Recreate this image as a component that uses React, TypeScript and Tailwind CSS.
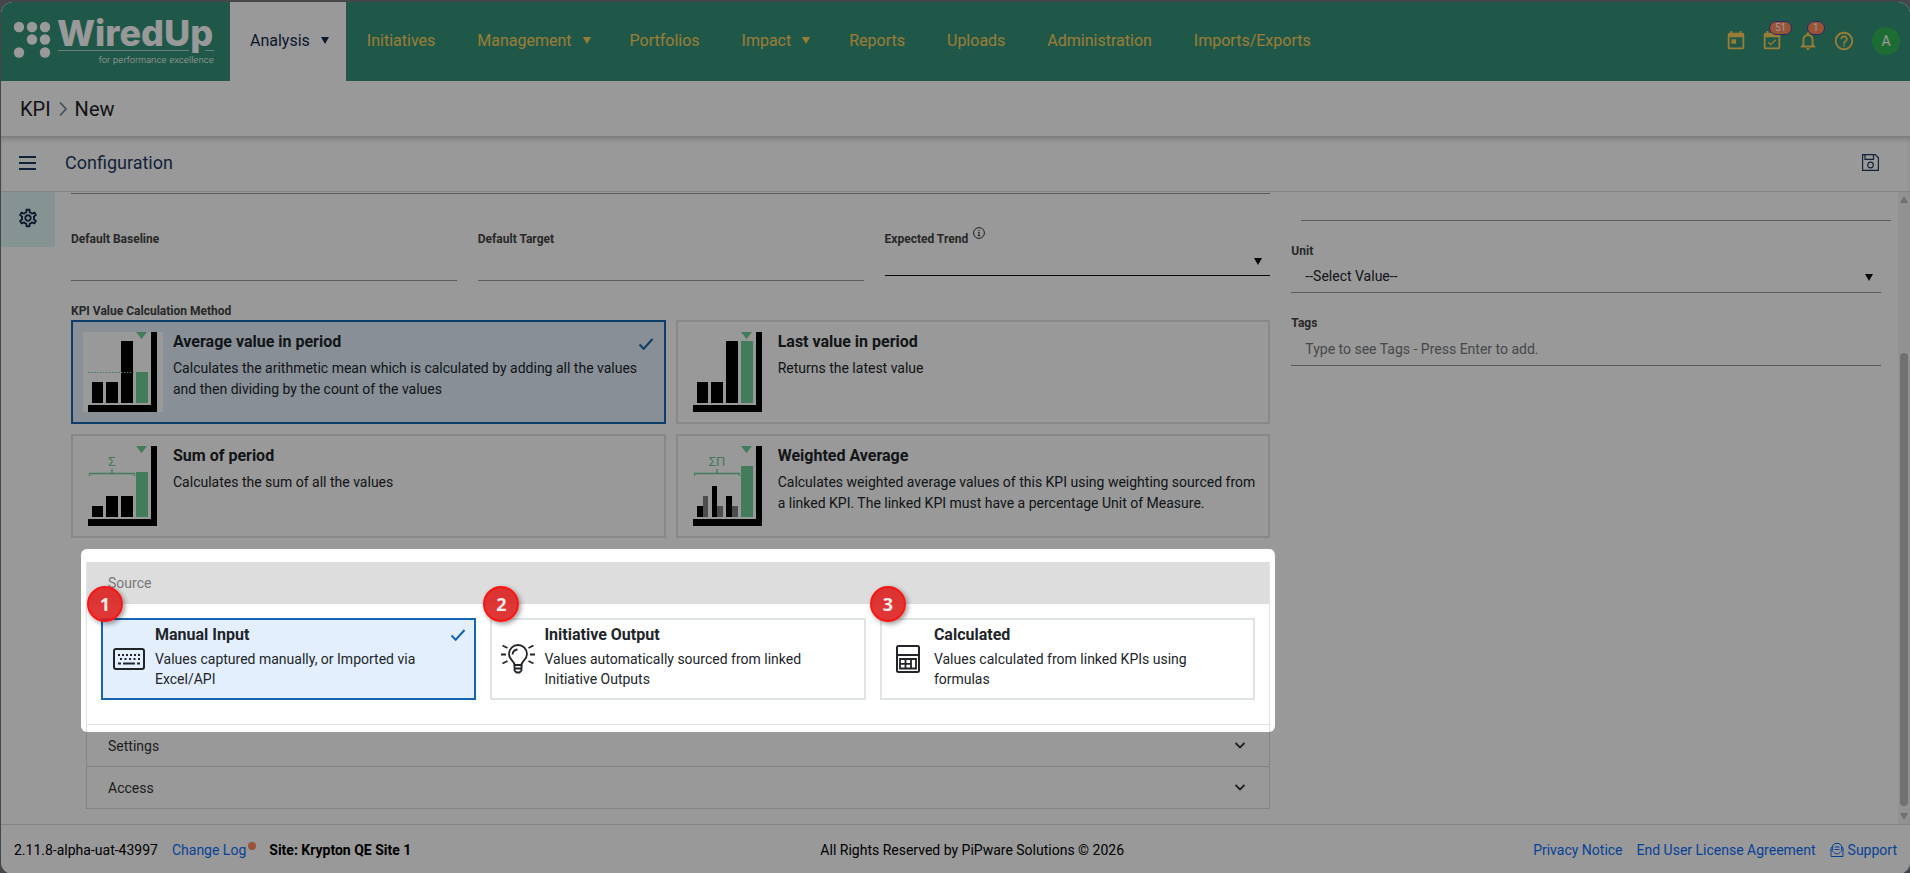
import React from 'react';
import { MdToday, MdEventAvailable, MdNotificationsNone, MdHelpOutline } from 'react-icons/md';

const NAV_ITEMS = [
  { label: 'Initiatives' },
  { label: 'Management', menu: true },
  { label: 'Portfolios' },
  { label: 'Impact', menu: true },
  { label: 'Reports' },
  { label: 'Uploads' },
  { label: 'Administration' },
  { label: 'Imports/Exports' },
];

const Caret = ({ className = '' }: { className?: string }) => (
  <svg viewBox="0 0 8 7" className={`w-2 h-[7px] shrink-0 fill-current ${className}`} aria-hidden="true">
    <path d="M0 0h8L4 7z" />
  </svg>
);

const Check = () => (
  <svg viewBox="0 0 16 16" className="w-4 h-4 shrink-0 text-[#1565b0]" fill="none" stroke="currentColor" strokeWidth="2" aria-hidden="true">
    <path d="M1.5 8.5l4.2 4.2L14.5 3" />
  </svg>
);

const Logo = () => (
  <svg viewBox="0 0 229 79" className="w-[229px] h-[79px]" fill="white" role="img" aria-label="WiredUp for performance excellence">
    <circle cx="18" cy="25" r="5.2" />
    <circle cx="31" cy="25" r="5.2" />
    <circle cx="44" cy="25" r="5.2" />
    <circle cx="31" cy="37.5" r="5.2" />
    <circle cx="44" cy="37.5" r="5.2" />
    <circle cx="18" cy="50.5" r="5.2" />
    <circle cx="44" cy="50.5" r="5.2" />
    <text x="56" y="44" fontFamily="Inter, sans-serif" fontWeight="800" fontSize="36">WiredUp</text>
    <path d="M57 48.5h131M204 48.5h9" stroke="white" strokeOpacity="0.6" />
    <text x="213" y="61" textAnchor="end" fontFamily="Inter, sans-serif" fontWeight="300" fontSize="9">for performance excellence</text>
  </svg>
);

type ChartKind = 'average' | 'last' | 'sum' | 'weighted';

const BARS: Record<ChartKind, { black: number[][]; gray: number[][]; greenTop: number }> = {
  average: { black: [[9, 50, 11], [23, 50, 12], [38, 9, 12]], gray: [], greenTop: 40 },
  last: { black: [[9, 50, 11], [23, 50, 12], [38, 9, 12]], gray: [], greenTop: 9 },
  sum: { black: [[9, 60, 11], [23, 50, 12], [38, 50, 12]], gray: [], greenTop: 26 },
  weighted: { black: [[9, 60, 6], [24, 40, 5], [38, 50, 6]], gray: [[15, 50, 5], [29, 60, 6], [44, 60, 6]], greenTop: 20 },
};

const MethodChart = ({ kind }: { kind: ChartKind }) => {
  const { black, gray, greenTop } = BARS[kind];
  const symbol = kind === 'sum' ? 'Σ' : kind === 'weighted' ? 'ΣΠ' : null;
  return (
    <svg viewBox="0 0 80 80" className="w-20 h-20 shrink-0 bg-white" aria-hidden="true">
      <path d="M68 0h6v80H5v-7h63z" />
      {black.map(([x, y, w]) => <rect key={x} x={x} y={y} width={w} height={71 - y} />)}
      {gray.map(([x, y, w]) => <rect key={x} x={x} y={y} width={w} height={71 - y} fill="#808080" />)}
      <rect x="53" y={greenTop} width="12" height={71 - greenTop} fill="#6fcf97" />
      <path d="M53 0h11l-5.500 7z" fill="#6fcf97" />
      {kind === 'average' && <path d="M5 40.500h46" stroke="#6fcf97" strokeDasharray="1.500 1.500" />}
      {symbol && (
        <>
          <path d="M6.500 30v-2.500h45V30M29 27.500V23" fill="none" stroke="#6fcf97" strokeWidth="1.3" />
          <text x="29" y="20" textAnchor="middle" fontFamily="Roboto, sans-serif" fontSize="13" fill="#6fcf97">{symbol}</text>
        </>
      )}
    </svg>
  );
};

const KeyboardIcon = () => (
  <svg viewBox="0 0 32 22" className="w-8 h-[22px]" fill="none" stroke="#212529" strokeWidth="2" aria-hidden="true">
    <rect x="1" y="1" width="30" height="20" rx="2" />
    <path d="M5 7h23" strokeDasharray="2 2" />
    <path d="M7 11h20" strokeDasharray="2 2.500" />
    <path d="M5 15.500h3M10 15.500h12M24 15.500h3" />
  </svg>
);

const BulbIcon = () => (
  <svg viewBox="0 0 36 30" className="w-9 h-[30px]" fill="none" stroke="#212529" strokeWidth="1.8" aria-hidden="true">
    <path d="M14.500 21c0-4-5.500-5-5.500-11a9 9 0 0 1 18 0c0 6-5.500 7-5.500 11z" />
    <path d="M12.500 10.500A5.500 5.500 0 0 1 17.500 5.500" />
    <path d="M14.500 21v5.500l2 2h3l2-2V21M14.500 24.500h7" />
    <path d="M1 10.500h5M30 10.500h5M2.500 1.500l5 2.500M33.500 1.500l-5 2.500M2.500 19.500l5-2.500M33.500 19.500l-5-2.500" />
  </svg>
);

const CalculatorIcon = () => (
  <svg viewBox="0 0 24 28" className="w-6 h-7" fill="none" stroke="#212529" strokeWidth="2" aria-hidden="true">
    <rect x="1" y="1" width="22" height="26" rx="1.500" />
    <path d="M1 10h22" />
    <path d="M4 14h16v9.500H4zM9.500 14v9.500M15 14v9.500M4 18.800h11" strokeWidth="1.800" />
  </svg>
);

const METHODS: { kind: ChartKind; title: string; description: string; selected?: boolean }[] = [
  { kind: 'average', title: 'Average value in period', description: 'Calculates the arithmetic mean which is calculated by adding all the values and then dividing by the count of the values', selected: true },
  { kind: 'last', title: 'Last value in period', description: 'Returns the latest value' },
  { kind: 'sum', title: 'Sum of period', description: 'Calculates the sum of all the values' },
  { kind: 'weighted', title: 'Weighted Average', description: 'Calculates weighted average values of this KPI using weighting sourced from a linked KPI. The linked KPI must have a percentage Unit of Measure.' },
];

const SOURCES = [
  { icon: <KeyboardIcon />, title: 'Manual Input', description: 'Values captured manually, or Imported via Excel/API', selected: true, pin: '-left-4' },
  { icon: <BulbIcon />, title: 'Initiative Output', description: 'Values automatically sourced from linked Initiative Outputs', pin: '-left-[9px]' },
  { icon: <CalculatorIcon />, title: 'Calculated', description: 'Values calculated from linked KPIs using formulas', pin: '-left-3' },
];

const cardColors = (selected?: boolean) =>
  selected ? 'border-[#1565b0] bg-[#e3effc]' : 'border-[#dfe5e5] bg-white';

const labelClass = 'flex text-xs leading-[18px] font-bold text-[#444]';

const Header = () => (
  <header className="flex items-stretch bg-[#35937a] text-[#ffd05a]">
    <a href="#home"><Logo /></a>
    <nav className="flex flex-1 text-base">
      <button type="button" className="flex items-center gap-[11px] pl-5 pr-[17px] pb-0.5 bg-white text-[#14284b]">
        Analysis <Caret />
      </button>
      {NAV_ITEMS.map(({ label, menu }) => (
        <button key={label} type="button" className={`flex items-center gap-[11px] pl-[21px] pb-0.5 ${menu ? 'pr-[18px]' : 'pr-[21px]'}`}>
          {label} {menu && <Caret />}
        </button>
      ))}
    </nav>
    <div className="flex items-center gap-3.5 pr-2.5 pb-0.5">
      <button type="button" aria-label="Calendar"><MdToday size={22} /></button>
      <button type="button" aria-label="Tasks" className="relative">
        <MdEventAvailable size={22} />
        <span className="absolute -top-[9px] left-2 px-[5px] h-3.5 rounded-full border border-[#4d45a8] bg-[#ff8a5c] text-[10px] leading-3 text-white">51</span>
      </button>
      <button type="button" aria-label="Notifications" className="relative">
        <MdNotificationsNone size={22} />
        <span className="absolute -top-[9px] left-2.5 px-[5px] h-3.5 rounded-full border border-[#4d45a8] bg-[#ff8a5c] text-[10px] leading-3 text-white">1</span>
      </button>
      <button type="button" aria-label="Help"><MdHelpOutline size={22} /></button>
      <button type="button" aria-label="Account" className="ml-[3px] w-7 h-7 rounded-full bg-[#2fb457] text-sm text-white">A</button>
    </div>
  </header>
);

const CollapsedSection = ({ title }: { title: string }) => (
  <button type="button" className="flex items-center justify-between w-full h-[42px] pl-[21px] pr-6 border-x border-b border-[#d8dcdc] text-sm text-[#333]">
    {title}
    <svg viewBox="0 0 10 7" className="w-2.5 h-[7px]" fill="none" stroke="currentColor" strokeWidth="1.8" aria-hidden="true">
      <path d="M0.500 1L5 5.500 9.500 1" />
    </svg>
  </button>
);

const SourceSection = () => (
  <section className="relative">
    {/* dims everything outside the source section */}
    <div className="absolute z-10 -inset-x-[5px] -top-[13px] -bottom-[7px] rounded-md shadow-[0_0_0_2400px_rgba(0,0,0,0.4)] pointer-events-none" />
    <div className="border-x border-b border-[#dfe3e3]">
      <h2 className="h-[42px] pl-[21px] bg-[#dddddd] text-sm leading-[42px] text-[#777]">Source</h2>
      <div className="grid grid-cols-3 gap-3.5 px-3.5 pt-3.5 pb-6">
        {SOURCES.map(({ icon, title, description, selected, pin }, i) => (
          <button key={title} type="button" className={`relative flex items-start h-[82px] pt-[5px] pr-2 border-2 text-left text-[#212529] ${cardColors(selected)}`}>
            <span className="flex items-center justify-center self-center w-[52px] pb-1.5 shrink-0">{icon}</span>
            <span className="flex-1">
              <span className="block text-base leading-5 font-bold">{title}</span>
              <span className="block mt-1 text-sm leading-5">{description}</span>
            </span>
            <span className="w-4 pt-0.5 shrink-0">{selected && <Check />}</span>
            <span className={`absolute z-20 -top-[34px] ${pin} w-9 h-9 rounded-full border-2 border-[#fb1414] bg-[#dc2020]/90 font-['Open_Sans',sans-serif] font-bold text-lg leading-8 text-center text-white/90 shadow-[2px_2px_5px_rgba(0,0,0,0.4)]`}>
              {i + 1}
            </span>
          </button>
        ))}
      </div>
    </div>
  </section>
);

const KpiForm = () => (
  <div className="flex-2 min-w-0">
    <div className="h-0.5 border-b border-[#999]" />
    <div className="grid grid-cols-3 gap-[21px] pt-9">
      <div>
        <label htmlFor="baseline" className={labelClass}>Default Baseline</label>
        <input id="baseline" className="block w-full h-[33px] border-b border-[#999] text-sm outline-none" />
      </div>
      <div>
        <label htmlFor="target" className={labelClass}>Default Target</label>
        <input id="target" className="block w-full h-[33px] border-b border-[#999] text-sm outline-none" />
      </div>
      <div>
        <label htmlFor="trend" className={labelClass}>
          Expected Trend
          <svg viewBox="0 0 12 12" className="w-3 h-3 ml-[5px] -mt-[3px]" fill="none" stroke="#333" aria-hidden="true">
            <circle cx="6" cy="6" r="5.400" />
            <path d="M6 5v4M6 2.800v1.400M5 5.500h1M4.800 8.700h2.400" />
          </svg>
        </label>
        <div className="relative">
          <select id="trend" className="block w-full h-7 border-b border-[#111] appearance-none text-sm outline-none">
            <option value=""></option>
          </select>
          <Caret className="absolute right-2 top-2.5 text-[#111]" />
        </div>
      </div>
    </div>

    <h3 className={`${labelClass} mt-[21px]`}>KPI Value Calculation Method</h3>
    <div className="grid grid-cols-2 gap-2.5">
      {METHODS.map(({ kind, title, description, selected }) => (
        <button key={kind} type="button" className={`flex items-start gap-2.5 h-[104px] p-2.5 pr-1 border-2 text-left text-[#212529] ${cardColors(selected)}`}>
          <MethodChart kind={kind} />
          <span className="flex-1">
            <span className="flex justify-between pr-1.5 text-base leading-5 font-bold">
              {title}
              {selected && <span className="h-5 pt-1"><Check /></span>}
            </span>
            <span className="block mt-1.5 pr-1 text-sm leading-[21px]">{description}</span>
          </span>
        </button>
      ))}
    </div>

    <div className="mt-6 ml-[15px]">
      <SourceSection />
      <CollapsedSection title="Settings" />
      <CollapsedSection title="Access" />
    </div>
  </div>
);

const SideFields = () => (
  <div className="flex-1 min-w-0">
    <div className="h-[29px] ml-2.5 border-b border-[#999]" />
    <div className="pr-2.5">
      <label htmlFor="unit" className={`${labelClass} mt-[21px]`}>Unit</label>
      <div className="relative">
        <select id="unit" className="block w-full h-[33px] pl-3.5 border-b border-[#999] appearance-none text-sm text-[#212529] outline-none">
          <option>--Select Value--</option>
        </select>
        <Caret className="absolute right-2 top-3.5 text-[#111]" />
      </div>
      <label htmlFor="tags" className={`${labelClass} mt-[21px]`}>Tags</label>
      <input id="tags" placeholder="Type to see Tags - Press Enter to add." className="block w-full h-[34px] pl-3.5 border-b border-[#999] text-sm placeholder:text-[#75797d] outline-none" />
    </div>
  </div>
);

const ScrollTrack = () => (
  <div className="flex flex-col items-center w-3 py-1 bg-[#f3f3f3] text-[#bbb]" aria-hidden="true">
    <Caret className="rotate-180" />
    <div className="flex-1 w-2 pt-[150px] pb-[7px]">
      <div className="h-full rounded-full bg-[#bdbdbd]" />
    </div>
    <Caret />
  </div>
);

const Footer = () => (
  <footer className="flex items-center justify-between h-[50px] px-[13px] border-t border-[#dcdcdc] text-sm text-black">
    <div className="flex">
      <span>2.11.8-alpha-uat-43997</span>
      <a href="#changelog" className="ml-3.5 text-[#0d6efd]">Change Log</a>
      <span className="w-2 h-2 mt-0.5 ml-0.5 rounded-full bg-[#ff8a5c]" />
      <span className="ml-[13px] font-bold">Site: Krypton QE Site 1</span>
    </div>
    <span>All Rights Reserved by PiPware Solutions © 2026</span>
    <div className="flex gap-3.5 text-[#0d6efd]">
      <a href="#privacy">Privacy Notice</a>
      <a href="#eula">End User License Agreement</a>
      <a href="#support" className="flex items-center gap-1">
        <svg viewBox="0 0 14 14" className="w-3.5 h-3.5" fill="none" stroke="currentColor" aria-hidden="true">
          <path d="M2.500 3.500L1 5v8.500h12V5l-1.500-1.500M2.500 7V2.500L5 .5h4l2.500 2V7M1 6.500l3 3a4 4 0 0 0 6 0l3-3M4.500 4h5M4.500 6.500h5" />
        </svg>
        Support
      </a>
    </div>
  </footer>
);

const App: React.FC = () => {
  return (
    <div className="min-h-screen flex flex-col bg-[#45464a] pt-0.5 pl-px font-[Roboto,sans-serif]">
      <div className="relative isolate flex-1 flex flex-col overflow-hidden rounded-xl bg-white">
        <Header />
        <div className="flex items-center gap-2 h-[55px] pl-[19px] text-xl text-[#222]">
          <a href="#kpi">KPI</a>
          <svg viewBox="0 0 8 14" className="w-2 h-3.5" fill="none" stroke="#7c8796" strokeWidth="1.8" aria-hidden="true">
            <path d="M1 0.500L7 7 1 13.500" />
          </svg>
          <h1>New</h1>
        </div>
        <div className="flex items-center h-14 pl-[18px] pr-[31px] pb-0.5 border-b border-[#dcdcdc] text-[#1f3a5f] shadow-[inset_0_5px_6px_-3px_rgba(0,0,0,0.25)]">
          <button type="button" aria-label="Menu">
            <svg viewBox="0 0 17 16" className="w-[17px] h-4" stroke="currentColor" strokeWidth="2" aria-hidden="true">
              <path d="M0 2h17M0 8h17M0 14h17" />
            </svg>
          </button>
          <h2 className="flex-1 ml-[29px] text-lg">Configuration</h2>
          <button type="button" aria-label="Save">
            <svg viewBox="0 0 17 17" className="w-[17px] h-[17px]" fill="none" stroke="currentColor" strokeWidth="1.2" aria-hidden="true">
              <path d="M.6.6h12.600l3.200 3.200v12.600H.6zM3 .6v4.800h8.500V.6" />
              <circle cx="8.500" cy="11" r="2.800" />
            </svg>
          </button>
        </div>
        <main className="flex-1 flex">
          <aside className="w-[54px] shrink-0">
            <button type="button" aria-label="Settings" className="flex items-center justify-center w-full h-[55px] pb-[3px] bg-[#dff5f5] text-[#14284b]">
              <svg viewBox="0 0 24 24" className="w-[22px] h-[22px] fill-current" aria-hidden="true">
                <path d="M19.430 12.980c.04-.32.07-.64.07-.98 0-.34-.03-.66-.07-.98l2.110-1.650c.19-.15.24-.42.12-.64l-2-3.460c-.09-.16-.26-.25-.44-.25-.06 0-.12.01-.17.03l-2.490 1c-.52-.4-1.080-.73-1.690-.98l-.38-2.650C14.460 2.180 14.250 2 14 2h-4c-.25 0-.46.18-.49.42l-.38 2.650c-.61.25-1.170.59-1.690.98l-2.490-1c-.06-.02-.12-.03-.18-.03-.17 0-.34.09-.43.25l-2 3.460c-.13.22-.07.49.12.64l2.110 1.650c-.04.32-.07.65-.07.98 0 .33.03.66.07.98l-2.110 1.650c-.19.15-.24.42-.12.64l2 3.460c.09.16.26.25.44.25.06 0 .12-.01.17-.03l2.490-1c.52.4 1.080.73 1.690.98l.38 2.650c.03.24.24.42.49.42h4c.25 0 .46-.18.49-.42l.38-2.650c.61-.25 1.170-.59 1.690-.98l2.490 1c.06.02.12.03.18.03.17 0 .34-.09.43-.25l2-3.460c.12-.22.07-.49-.12-.64l-2.110-1.650zm-1.980-1.710c.04.31.05.52.05.73 0 .21-.02.43-.05.73l-.14 1.130.89.7 1.080.84-.7 1.210-1.270-.51-1.040-.42-.9.68c-.43.32-.84.56-1.250.73l-1.060.43-.16 1.130-.2 1.350h-1.400l-.19-1.350-.16-1.130-1.060-.43c-.43-.18-.83-.41-1.230-.71l-.91-.7-1.060.43-1.270.51-.7-1.210 1.080-.84.89-.7-.14-1.130c-.03-.31-.05-.54-.05-.74s.02-.43.05-.73l.14-1.130-.89-.7-1.080-.84.7-1.210 1.270.51 1.040.42.9-.68c.43-.32.84-.56 1.250-.73l1.060-.43.16-1.130.2-1.350h1.390l.19 1.350.16 1.130 1.060.43c.43.18.83.41 1.230.71l.91.7 1.060-.43 1.270-.51.7 1.210-1.070.85-.89.7.14 1.130zM12 8c-2.210 0-4 1.790-4 4s1.790 4 4 4 4-1.790 4-4-1.790-4-4-4zm0 6c-1.100 0-2-.9-2-2s.9-2 2-2 2 .9 2 2-.9 2-2 2z" />
              </svg>
            </button>
          </aside>
          <div className="flex-1 flex gap-[21px] pl-4 pr-[7px] pb-[15px]">
            <KpiForm />
            <SideFields />
          </div>
          <ScrollTrack />
        </main>
        <Footer />
      </div>
    </div>
  );
};

export default App;
